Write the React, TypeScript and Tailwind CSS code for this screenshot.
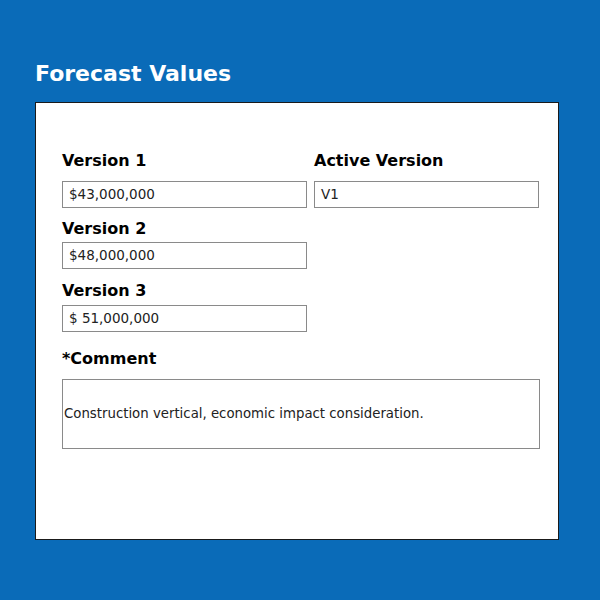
import React from 'react';

const font = { fontFamily: '"DejaVu Sans", "Open Sans", sans-serif' };

const Field: React.FC<{ value: string; className?: string }> = ({ value, className = '' }) => (
  <div className={`h-[27px] border border-[#8a8a8a] bg-white flex items-center px-[6px] text-[13.5px] text-[#222] ${className}`}>
    {value}
  </div>
);

const Label: React.FC<{ text: string; className?: string }> = ({ text, className = '' }) => (
  <div className={`text-[16px] leading-[20px] font-bold text-black ${className}`}>{text}</div>
);

export default function App() {
  return (
    <div className="w-[600px] h-[600px] bg-[#0a6bb8] pt-[60px] pl-[35px]" style={font}>
      <h1 className="text-[22px] leading-[28px] font-bold text-white">Forecast Values</h1>
      <div className="mt-[14px] w-[524px] h-[438px] bg-white border border-[#1a1a1a] pt-[48px] pl-[26px]">
        <div className="flex gap-[7px]">
          <div className="w-[245px]">
            <Label text="Version 1" />
            <Field value="$43,000,000" className="mt-[10px]" />
          </div>
          <div className="w-[225px]">
            <Label text="Active Version" />
            <Field value="V1" className="mt-[10px]" />
          </div>
        </div>
        <div className="w-[245px]">
          <Label text="Version 2" className="mt-[11px]" />
          <Field value="$48,000,000" className="mt-[3px]" />
          <Label text="Version 3" className="mt-[12px]" />
          <Field value="$ 51,000,000" className="mt-[4px]" />
        </div>
        <Label text="*Comment" className="mt-[17px]" />
        <div className="mt-[10px] w-[478px] h-[70px] border border-[#8a8a8a] flex items-center pl-[1px] text-[13.3px] text-[#222]">
          Construction vertical, economic impact consideration.
        </div>
      </div>
    </div>
  );
}
